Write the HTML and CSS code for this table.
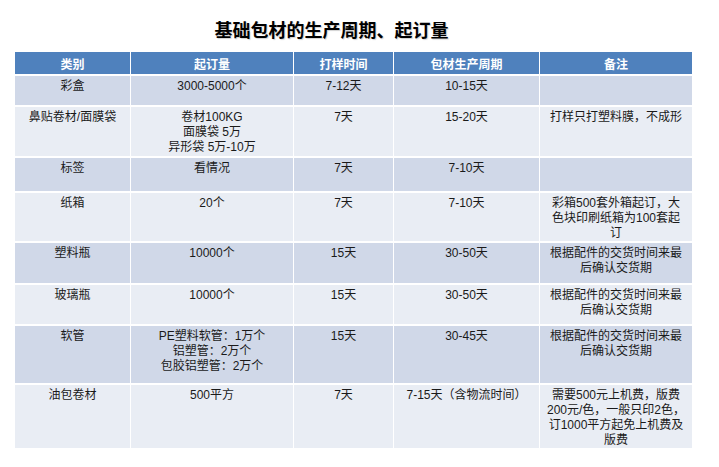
FILE: index.html
```html
<!DOCTYPE html>
<html lang="zh-CN">
<head>
<meta charset="utf-8">
<title>基础包材的生产周期、起订量</title>
<link rel="stylesheet" href="styles.css">
</head>
<body>
<div class="page">
  <h1 class="title">基础包材的生产周期、起订量</h1>
  <table class="grid">
    <colgroup>
      <col class="c1"><col class="c2"><col class="c3"><col class="c4"><col class="c5">
    </colgroup>
    <thead>
      <tr class="head">
        <th>类别</th><th>起订量</th><th>打样时间</th><th>包材生产周期</th><th>备注</th>
      </tr>
    </thead>
    <tbody>
      <tr class="dark h1r">
        <td>彩盒</td><td>3000-5000个</td><td>7-12天</td><td>10-15天</td><td></td>
      </tr>
      <tr class="light h2r">
        <td>鼻贴卷材/面膜袋</td><td>卷材100KG<br>面膜袋 5万<br>异形袋 5万-10万</td><td>7天</td><td>15-20天</td><td>打样只打塑料膜，不成形</td>
      </tr>
      <tr class="dark h3r">
        <td>标签</td><td>看情况</td><td>7天</td><td>7-10天</td><td></td>
      </tr>
      <tr class="light h4r">
        <td>纸箱</td><td>20个</td><td>7天</td><td>7-10天</td><td>彩箱500套外箱起订，大<br>色块印刷纸箱为100套起<br>订</td>
      </tr>
      <tr class="dark h5r">
        <td>塑料瓶</td><td>10000个</td><td>15天</td><td>30-50天</td><td>根据配件的交货时间来最<br>后确认交货期</td>
      </tr>
      <tr class="light h6r">
        <td>玻璃瓶</td><td>10000个</td><td>15天</td><td>30-50天</td><td>根据配件的交货时间来最<br>后确认交货期</td>
      </tr>
      <tr class="dark h7r">
        <td>软管</td><td>PE塑料软管：1万个<br>铝塑管：2万个<br>包胶铝塑管：2万个</td><td>15天</td><td>30-45天</td><td>根据配件的交货时间来最<br>后确认交货期</td>
      </tr>
      <tr class="light h8r">
        <td>油包卷材</td><td>500平方</td><td>7天</td><td>7-15天（含物流时间）</td><td>需要500元上机费，版费<br>200元/色，一般只印2色，<br>订1000平方起免上机费及<br>版费</td>
      </tr>
    </tbody>
  </table>
</div>
</body>
</html>
```

FILE: styles.css
```css
html, body {
  margin: 0;
  padding: 0;
  background: #ffffff;
}

.page {
  display: flex;
  flex-direction: column;
  align-items: flex-start;
  padding: 17px 0 0 15px;
  font-family: "Liberation Sans", "Noto Sans CJK SC", sans-serif;
  color: #1a1a1a;
}

.title {
  width: 633px;
  margin: 0 0 11px 0;
  text-align: center;
  font-family: "Noto Sans CJK SC", sans-serif;
  font-weight: 700;
  font-size: 18px;
  line-height: 24px;
  color: #000000;
  text-shadow: 1px 1px 1px rgba(0, 0, 0, 0.18);
}

.grid {
  border-collapse: separate;
  border-spacing: 0;
  table-layout: fixed;
  width: 677px;
  font-size: 12px;
  line-height: 15px;
}

.c1 { width: 116px; }
.c2 { width: 163px; }
.c3 { width: 100px; }
.c4 { width: 146px; }
.c5 { width: 152px; }

.grid th,
.grid td {
  border-right: 1px solid #ffffff;
  border-bottom: 2px solid #ffffff;
  text-align: center;
  white-space: nowrap;
  padding: 3px 2px 0;
}

.grid th:last-child,
.grid td:last-child {
  border-right: none;
}

.grid th {
  background: #4f81bd;
  color: #ffffff;
  font-family: "Noto Sans CJK SC", sans-serif;
  font-weight: 700;
  vertical-align: middle;
  padding: 0 2px;
}

.grid td {
  vertical-align: top;
}

.dark td { background: #d0d8e8; }
.light td { background: #e9edf4; }

.head { height: 24px; }
.h1r { height: 31px; }
.h2r { height: 51px; }
.h3r { height: 35px; }
.h4r { height: 50px; }
.h5r { height: 42px; }
.h6r { height: 41px; }
.h7r { height: 59px; }
.h8r { height: 65px; }
```
